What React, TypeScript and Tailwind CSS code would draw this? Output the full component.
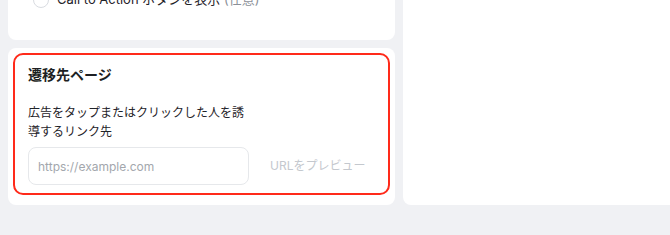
import React from 'react';

const font = { fontFamily: 'Inter, "Noto Sans CJK JP", sans-serif' };

const App: React.FC = () => {
  return (
    <div className="min-h-screen overflow-hidden bg-[#f0f1f4]" style={font}>
      <div className="-mt-[40px] grid w-max grid-cols-[387px_300px] gap-2 pl-2">
        {/* Left column */}
        <div className="flex flex-col gap-2">
          {/* CTA card (scrolled off the top) */}
          <div className="rounded-lg bg-white pl-[25px] pt-[30px] pb-[30px]">
            <label className="flex h-5 items-center gap-2 text-[13px] text-[#1f2329]">
              <span className="h-4 w-4 shrink-0 rounded-full border border-[#d9dce1] bg-white" />
              <span className="whitespace-nowrap">
                Call to Action ボタンを表示 <span className="text-[#8b9098]">(任意)</span>
              </span>
            </label>
          </div>

          {/* Destination card */}
          <div className="rounded-lg bg-white px-[5px] pt-[5px] pb-[10px]">
            <div className="rounded-[10px] border-2 border-[#ff2a1a] pl-[13px] pr-4 pt-[10px] pb-2">
              <h2 className="text-[14px] font-bold leading-5 text-[#1d1f23]">遷移先ページ</h2>
              <p className="mt-[18px] w-[221px] text-[12px] leading-[19px] text-[#1f2329]">
                広告をタップまたはクリックした人を誘導するリンク先
              </p>
              <div className="mt-[6px] flex items-center gap-[21px]">
                <input
                  type="text"
                  placeholder="https://example.com"
                  className="h-[38px] w-[221px] rounded-lg border border-[#e6e8eb] bg-white pl-[9px] text-[12px] text-[#1f2329] outline-none placeholder:text-[#a3a7ad]"
                />
                <span className="whitespace-nowrap text-[12px] text-[#c4c8ce]">URLをプレビュー</span>
              </div>
            </div>
          </div>
        </div>

        {/* Right column */}
        <div className="rounded-l-lg bg-white" />
      </div>
    </div>
  );
};

export default App;
